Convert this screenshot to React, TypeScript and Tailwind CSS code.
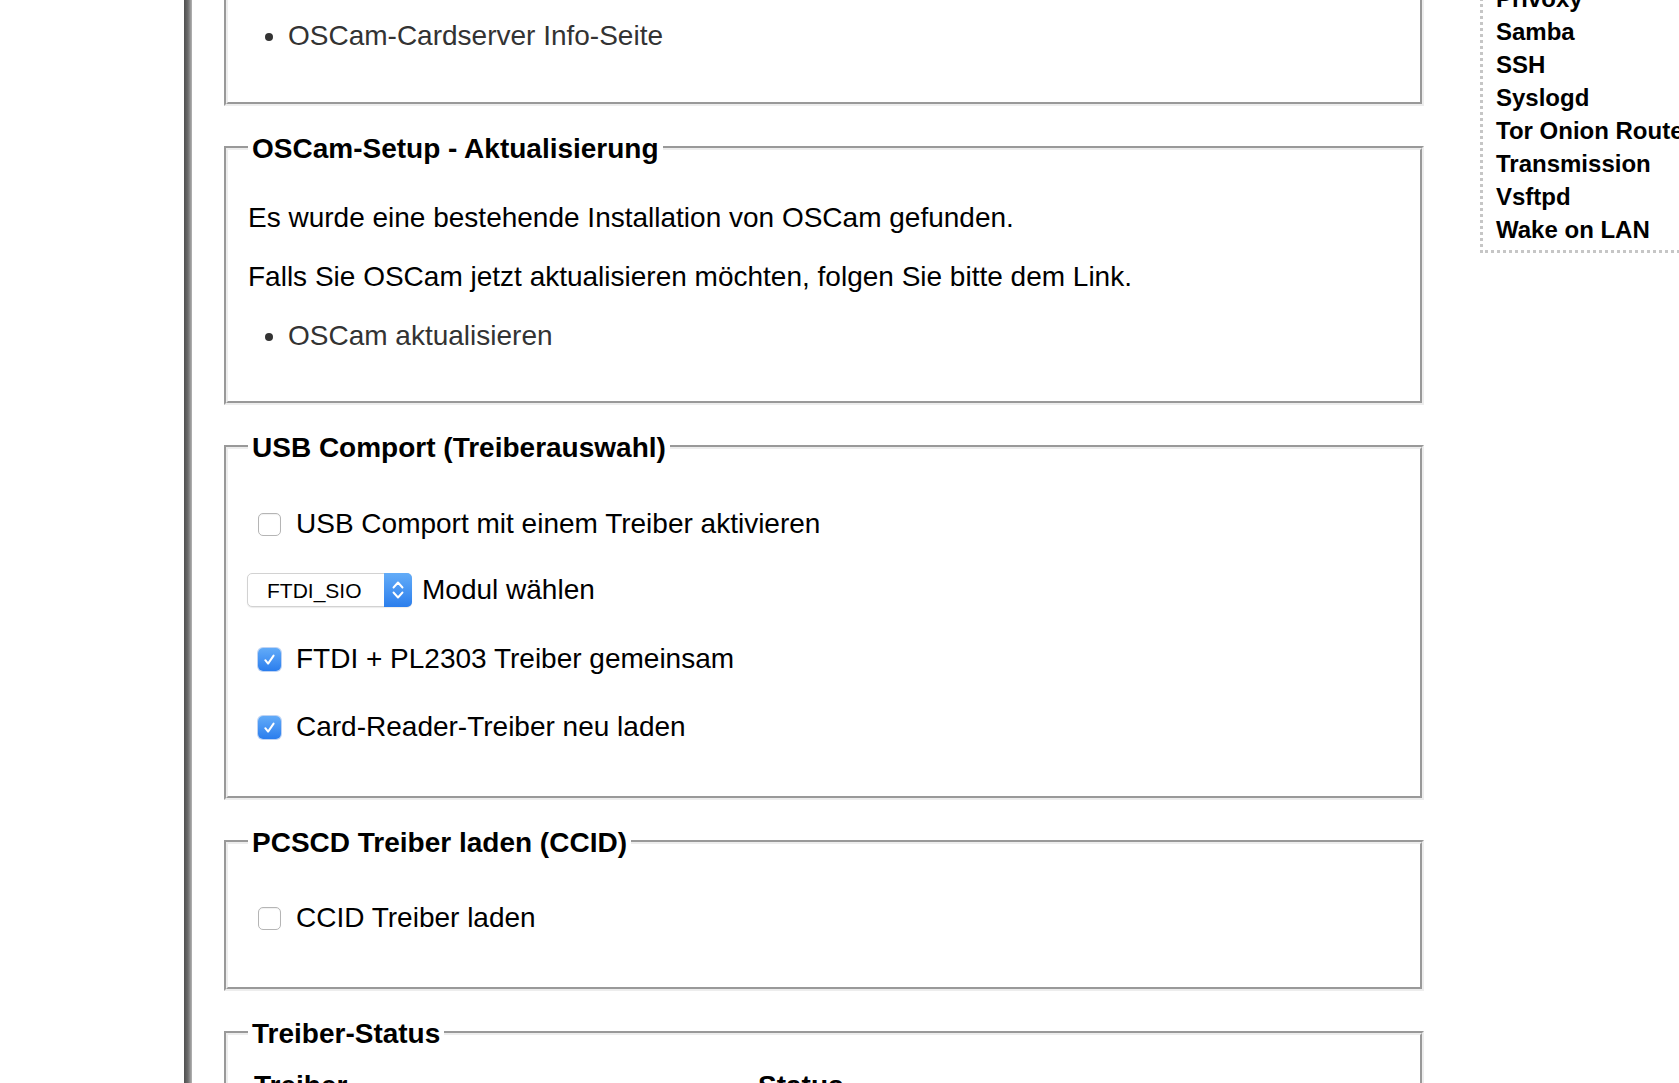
import React from "react";

function Legend({ children }: { children: React.ReactNode }) {
  return (
    <legend className="px-[4px] pt-[2px] text-[28px] leading-[32px] font-bold text-black">
      {children}
    </legend>
  );
}

function Box({ checked }: { checked?: boolean }) {
  if (checked) {
    return (
      <span className="flex h-[23px] w-[23px] shrink-0 items-center justify-center rounded-[5px] bg-linear-to-b from-[#62abf8] to-[#2a7ded] shadow-[0_0_0_1px_rgba(40,110,220,0.3)]">
        <svg width="17" height="17" viewBox="0 0 17 17">
          <path
            d="M4.3 9.2 L7.1 12.6 L12.6 4.6"
            fill="none"
            stroke="white"
            strokeWidth="2"
            strokeLinecap="round"
            strokeLinejoin="round"
          />
        </svg>
      </span>
    );
  }
  return (
    <span className="h-[23px] w-[23px] shrink-0 rounded-[5px] border border-[#b5b5b5] bg-white shadow-[inset_0_1px_1px_rgba(0,0,0,0.06)]" />
  );
}

function CheckRow({ checked, label, className }: { checked?: boolean; label: string; className?: string }) {
  return (
    <div className={"ml-[10px] flex h-[32px] items-center " + (className ?? "")}>
      <Box checked={checked} />
      <span className="ml-[15px] text-[28px] leading-[32px] text-black">{label}</span>
    </div>
  );
}

const fs = "w-[1200px] border-[4px] [border-style:groove] border-[#ededed] px-[20px]";

export default function App() {
  return (
    <div className="flex h-[1083px] w-[1679px] overflow-hidden bg-white font-['Liberation_Sans',Arial,sans-serif] text-black">
      <div className="w-[184px] shrink-0" />
      <div className="w-[8px] shrink-0 bg-linear-to-r from-[#4f4f4f] via-[#6d6d6d] to-[#b5b5b5]" />
      <main className="ml-[32px] w-[1200px] shrink-0">
        <fieldset className={fs + " mt-[-80px] pt-[96px] pb-[50px]"}>
          <ul className="list-disc pl-[40px] text-[28px] leading-[32px] text-[#333]">
            <li>OSCam-Cardserver Info-Seite</li>
          </ul>
        </fieldset>

        <fieldset className={fs + " mt-[25px] pt-[37px] pb-[49px]"}>
          <Legend>OSCam-Setup - Aktualisierung</Legend>
          <p className="text-[28px] leading-[32px]">Es wurde eine bestehende Installation von OSCam gefunden.</p>
          <p className="mt-[27px] text-[28px] leading-[32px]">
            Falls Sie OSCam jetzt aktualisieren möchten, folgen Sie bitte dem Link.
          </p>
          <ul className="mt-[27px] list-disc pl-[40px] text-[28px] leading-[32px] text-[#333]">
            <li>OSCam aktualisieren</li>
          </ul>
        </fieldset>

        <fieldset className={fs + " mt-[25px] pt-[44px] pb-[53px]"}>
          <Legend>USB Comport (Treiberauswahl)</Legend>
          <CheckRow label="USB Comport mit einem Treiber aktivieren" />
          <div className="ml-[-1px] mt-[33px] flex h-[34px] items-center">
            <div className="flex h-[34px] w-[165px] items-stretch rounded-[5px] border border-[#d2d2d2] bg-white shadow-[0_1px_1px_rgba(0,0,0,0.08)]">
              <span className="flex flex-1 items-center pl-[19px] pt-[2px] text-[21px] text-black">FTDI_SIO</span>
              <span className="-my-px -mr-px flex w-[28px] items-center justify-center rounded-r-[5px] bg-linear-to-b from-[#63acf8] to-[#2b7eec]">
                <svg width="14" height="26" viewBox="0 0 14 26">
                  <path d="M2.5 10.5 L7 5.5 L11.5 10.5" fill="none" stroke="white" strokeWidth="1.9" strokeLinecap="round" strokeLinejoin="round" />
                  <path d="M2.5 15.5 L7 20.5 L11.5 15.5" fill="none" stroke="white" strokeWidth="1.9" strokeLinecap="round" strokeLinejoin="round" />
                </svg>
              </span>
            </div>
            <span className="ml-[10px] text-[28px] leading-[32px]">Modul wählen</span>
          </div>
          <CheckRow checked className="mt-[36px]" label="FTDI + PL2303 Treiber gemeinsam" />
          <CheckRow checked className="mt-[36px]" label="Card-Reader-Treiber neu laden" />
        </fieldset>

        <fieldset className={fs + " mt-[25px] pt-[43px] pb-[53px]"}>
          <Legend>PCSCD Treiber laden (CCID)</Legend>
          <CheckRow label="CCID Treiber laden" />
        </fieldset>

        <fieldset className={fs + " mt-[25px] pt-[20px] pb-[40px]"}>
          <Legend>Treiber-Status</Legend>
          <table className="border-collapse text-[28px] leading-[32px]">
            <thead>
              <tr>
                <th className="w-[504px] px-[6px] text-left font-bold">Treiber</th>
                <th className="px-[6px] text-left font-bold">Status</th>
              </tr>
            </thead>
          </table>
        </fieldset>
      </main>

      <aside className="ml-[56px] w-[260px] shrink-0">
        <ul className="mt-[-21px] border-b-[3px] border-l-[3px] border-dotted border-[#c6c6c6] pb-[4px] pl-[13px] pt-[3px] text-[24px] font-bold leading-[33px] whitespace-nowrap">
          <li>Privoxy</li>
          <li>Samba</li>
          <li>SSH</li>
          <li>Syslogd</li>
          <li>Tor Onion Router</li>
          <li>Transmission</li>
          <li>Vsftpd</li>
          <li>Wake on LAN</li>
        </ul>
      </aside>
    </div>
  );
}
